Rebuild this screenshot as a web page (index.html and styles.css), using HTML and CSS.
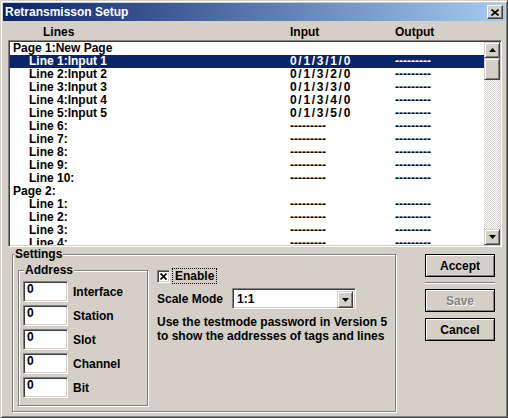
FILE: index.html
```html
<!DOCTYPE html>
<html lang="en">
<head>
    <meta charset="UTF-8">
    <title>Retransmisson Setup</title>
    <link rel="stylesheet" href="styles.css">
</head>
<body>
    <div class="window">
        <div class="titlebar">
            <span>Retransmisson Setup</span>
            <span class="close">
                <svg width="8" height="7" viewBox="0 0 8 7"><path d="M0.5 0.5 L7.5 6.5 M7.5 0.5 L0.5 6.5" stroke="#000" stroke-width="1.6" fill="none"/></svg>
            </span>
        </div>

        <div class="colhead">
            <span>Lines</span><span>Input</span><span>Output</span>
        </div>

        <div class="listbox">
            <div class="rows">
                <div class="row page"><span>Page 1:New Page</span><span></span><span></span></div>
                <div class="row sel"><span>Line 1:Input 1</span><span class="addr">0/1/3/1/0</span><span>---------</span></div>
                <div class="row"><span>Line 2:Input 2</span><span class="addr">0/1/3/2/0</span><span>---------</span></div>
                <div class="row"><span>Line 3:Input 3</span><span class="addr">0/1/3/3/0</span><span>---------</span></div>
                <div class="row"><span>Line 4:Input 4</span><span class="addr">0/1/3/4/0</span><span>---------</span></div>
                <div class="row"><span>Line 5:Input 5</span><span class="addr">0/1/3/5/0</span><span>---------</span></div>
                <div class="row"><span>Line 6:</span><span>---------</span><span>---------</span></div>
                <div class="row"><span>Line 7:</span><span>---------</span><span>---------</span></div>
                <div class="row"><span>Line 8:</span><span>---------</span><span>---------</span></div>
                <div class="row"><span>Line 9:</span><span>---------</span><span>---------</span></div>
                <div class="row"><span>Line 10:</span><span>---------</span><span>---------</span></div>
                <div class="row page"><span>Page 2:</span><span></span><span></span></div>
                <div class="row"><span>Line 1:</span><span>---------</span><span>---------</span></div>
                <div class="row"><span>Line 2:</span><span>---------</span><span>---------</span></div>
                <div class="row"><span>Line 3:</span><span>---------</span><span>---------</span></div>
                <div class="row"><span>Line 4:</span><span>---------</span><span>---------</span></div>
            </div>
            <div class="vscroll">
                <div class="sbtn"><svg width="7" height="4" viewBox="0 0 7 4"><polygon points="0,4 7,4 3.5,0"/></svg></div>
                <div class="sbtn thumb"></div>
                <div class="track"></div>
                <div class="sbtn"><svg width="7" height="4" viewBox="0 0 7 4"><polygon points="0,0 7,0 3.5,4"/></svg></div>
            </div>
        </div>

        <div class="bottom">
            <fieldset class="group settings">
                <legend>Settings</legend>
                <div class="settings-body">
                    <fieldset class="group address">
                        <legend>Address</legend>
                        <div class="field"><span class="edit">0</span><span>Interface</span></div>
                        <div class="field"><span class="edit">0</span><span>Station</span></div>
                        <div class="field"><span class="edit">0</span><span>Slot</span></div>
                        <div class="field"><span class="edit">0</span><span>Channel</span></div>
                        <div class="field"><span class="edit">0</span><span>Bit</span></div>
                    </fieldset>
                    <div class="options">
                        <div class="check">
                            <span class="box">
                                <svg width="7" height="7" viewBox="0 0 7 7"><path d="M0.5 0.5 L6.5 6.5 M6.5 0.5 L0.5 6.5" stroke="#000" stroke-width="1.7" fill="none"/></svg>
                            </span>
                            <span class="focus">Enable</span>
                        </div>
                        <div class="scale">
                            <span class="scale-label">Scale Mode</span>
                            <div class="combo">
                                <span class="combo-text">1:1</span>
                                <span class="sbtn drop"><svg width="7" height="4" viewBox="0 0 7 4"><polygon points="0,0 7,0 3.5,4"/></svg></span>
                            </div>
                        </div>
                        <p class="hint">Use the testmode password in Version 5<br>to show the addresses of tags and lines</p>
                    </div>
                </div>
            </fieldset>

            <div class="buttons">
                <button class="btn">Accept</button>
                <div class="sep"></div>
                <button class="btn" disabled>Save</button>
                <button class="btn">Cancel</button>
            </div>
        </div>
    </div>
</body>
</html>
```

FILE: styles.css
```css
*{
    margin:0;
    padding:0;
    box-sizing:border-box;
}
body {
    background:#d4d0c8;
    font:bold 12px "Liberation Sans", Arial, sans-serif;
    color:#000;
}
button {
    font:inherit;
    color:inherit;
    outline:none;
}
.window {
    width:508px;
    height:418px;
    padding:2px;
    border:1px solid;
    border-color:#d4d0c8 #404040 #404040 #d4d0c8;
    box-shadow:inset 1px 1px #fff, inset -1px -1px #808080;
    display:flex;
    flex-direction:column;
}
/* title bar */
.titlebar {
    height:18px;
    flex:none;
    display:flex;
    align-items:center;
    justify-content:space-between;
    padding-left:2px;
    background:linear-gradient(to right, #0a246a, #a6caf0);
    color:#fff;
}
.close {
    width:16px;
    height:14px;
    margin-right:2px;
    background:#d4d0c8;
    border:1px solid;
    border-color:#fff #404040 #404040 #fff;
    box-shadow:inset -1px -1px #808080;
    display:flex;
    align-items:center;
    justify-content:center;
}
/* list */
.colhead {
    height:19px;
    flex:none;
    padding:4px 0 0 40px;
    line-height:14px;
    display:grid;
    grid-template-columns:247px 105px 1fr;
}
.listbox {
    height:207px;
    flex:none;
    margin:0 3px 0 5px;
    padding:1px;
    background:#fff;
    border:1px solid;
    border-color:#808080 #fff #fff #808080;
    box-shadow:inset 1px 1px #404040, inset -1px -1px #d4d0c8;
    display:flex;
}
.rows {
    flex:1;
    overflow:hidden;
}
.row {
    height:13px;
    line-height:13px;
    white-space:nowrap;
    display:grid;
    grid-template-columns:280px 105px 1fr;
}
.row span:first-child {
    padding-left:19px;
}
.row.page span:first-child {
    padding-left:3px;
}
.row.sel {
    background:#0a246a;
    color:#fff;
}
.addr {
    letter-spacing:1.7px;
}
.vscroll {
    width:16px;
    display:flex;
    flex-direction:column;
}
.sbtn {
    height:16px;
    flex:none;
    background:#d4d0c8;
    border:1px solid;
    border-color:#d4d0c8 #404040 #404040 #d4d0c8;
    box-shadow:inset 1px 1px #fff, inset -1px -1px #808080;
    display:flex;
    align-items:center;
    justify-content:center;
}
.thumb {
    height:22px;
}
.track {
    flex:1;
    background:repeating-conic-gradient(#fff 0 25%, #d4d0c8 0 50%) 0 0 / 2px 2px;
}
/* settings */
.bottom {
    flex:1;
    display:flex;
    align-items:flex-start;
}
.group {
    border:1px solid #808080;
    box-shadow:inset 1px 1px #fff, 1px 1px #fff;
}
.group legend {
    margin-left:1px;
    padding:0 1px;
    line-height:13px;
    background:#d4d0c8;
}
.settings {
    width:384px;
    height:164px;
    margin:1px 0 0 9px;
}
.settings-body {
    display:flex;
    padding:3px 0 0 5px;
}
.address {
    width:130px;
    height:142px;
    padding:4px 0 0 4px;
}
.field {
    display:flex;
    align-items:center;
    gap:5px;
    margin-bottom:3px;
}
.edit {
    width:45px;
    height:21px;
    padding:1px 0 0 3px;
    line-height:13px;
    background:#fff;
    border:1px solid;
    border-color:#808080 #fff #fff #808080;
    box-shadow:inset 1px 1px #404040, inset -1px -1px #d4d0c8;
}
.options {
    margin-left:9px;
    padding-top:4px;
}
.check {
    display:flex;
    align-items:center;
    gap:2px;
}
.box {
    width:13px;
    height:13px;
    background:#fff;
    border:1px solid;
    border-color:#808080 #fff #fff #808080;
    box-shadow:inset 1px 1px #404040, inset -1px -1px #d4d0c8;
    display:flex;
    align-items:center;
    justify-content:center;
}
.focus {
    height:16px;
    padding:0 2px;
    line-height:14px;
    border:1px dotted #000;
}
.scale {
    display:flex;
    align-items:center;
    margin-top:4px;
}
.scale-label {
    width:75px;
}
.combo {
    width:124px;
    height:21px;
    padding:2px;
    background:#fff;
    border:1px solid;
    border-color:#808080 #fff #fff #808080;
    box-shadow:inset 1px 1px #404040, inset -1px -1px #d4d0c8;
    display:flex;
    justify-content:space-between;
}
.combo-text {
    padding-left:2px;
    line-height:17px;
}
.drop {
    width:16px;
    height:17px;
}
.hint {
    margin-top:6px;
    line-height:14px;
}
/* buttons */
.buttons {
    width:70px;
    margin:7px 0 0 29px;
    display:flex;
    flex-direction:column;
}
.btn {
    height:23px;
    background:#d4d0c8;
    border:1px solid #000;
    box-shadow:inset 1px 1px #fff, inset -1px -1px #808080;
    margin-bottom:6px;
}
.btn:disabled {
    color:#808080;
    text-shadow:1px 1px #fff;
}
.sep {
    height:2px;
    margin:-1px 0 5px;
    border-top:1px solid #808080;
    border-bottom:1px solid #fff;
}
```
